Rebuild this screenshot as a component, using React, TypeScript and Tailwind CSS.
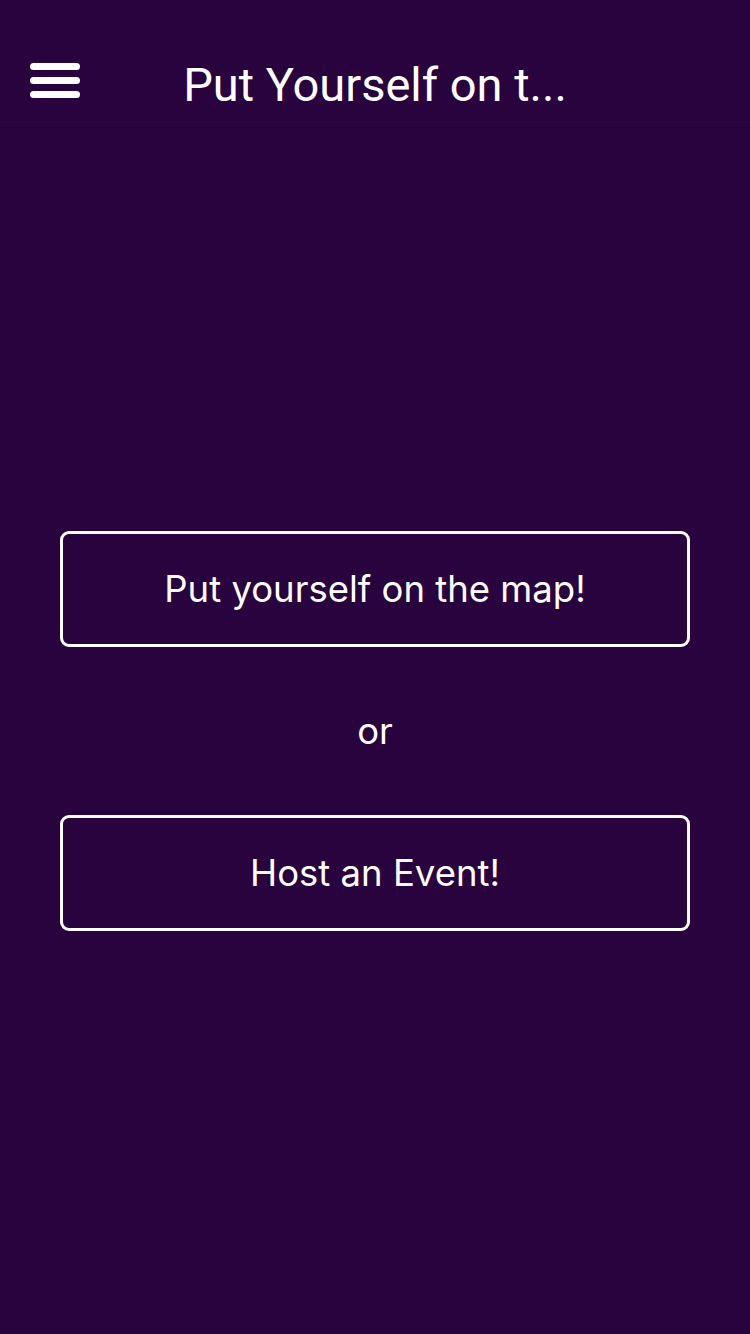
import React from "react";

export default function App() {
  return (
    <div className="w-[750px] h-[1334px] bg-[#29033d] flex flex-col text-white">
      <div className="h-[128px] shrink-0 flex items-center border-b border-[#1e022d] relative">
        <div className="absolute left-[30px] top-[63px] w-[50px] flex flex-col gap-[7px]">
          <div className="h-[7px] rounded-full bg-white" />
          <div className="h-[7px] rounded-full bg-white" />
          <div className="h-[7px] rounded-full bg-white" />
        </div>
        <div className="w-full text-center pt-[42px] text-[47px] leading-none font-['Roboto',sans-serif]">
          Put Yourself on t...
        </div>
      </div>
      <div className="flex flex-col items-center px-[60px] pt-[403px] font-['Inter',sans-serif]">
        <button className="w-[630px] h-[116px] border-[3px] border-white rounded-[9px] text-[36.5px] text-white">
          Put yourself on the map!
        </button>
        <div className="h-[168px] flex items-center justify-center text-[36.5px]">or</div>
        <button className="w-[630px] h-[116px] border-[3px] border-white rounded-[9px] text-[36.5px] text-white">
          Host an Event!
        </button>
      </div>
    </div>
  );
}
